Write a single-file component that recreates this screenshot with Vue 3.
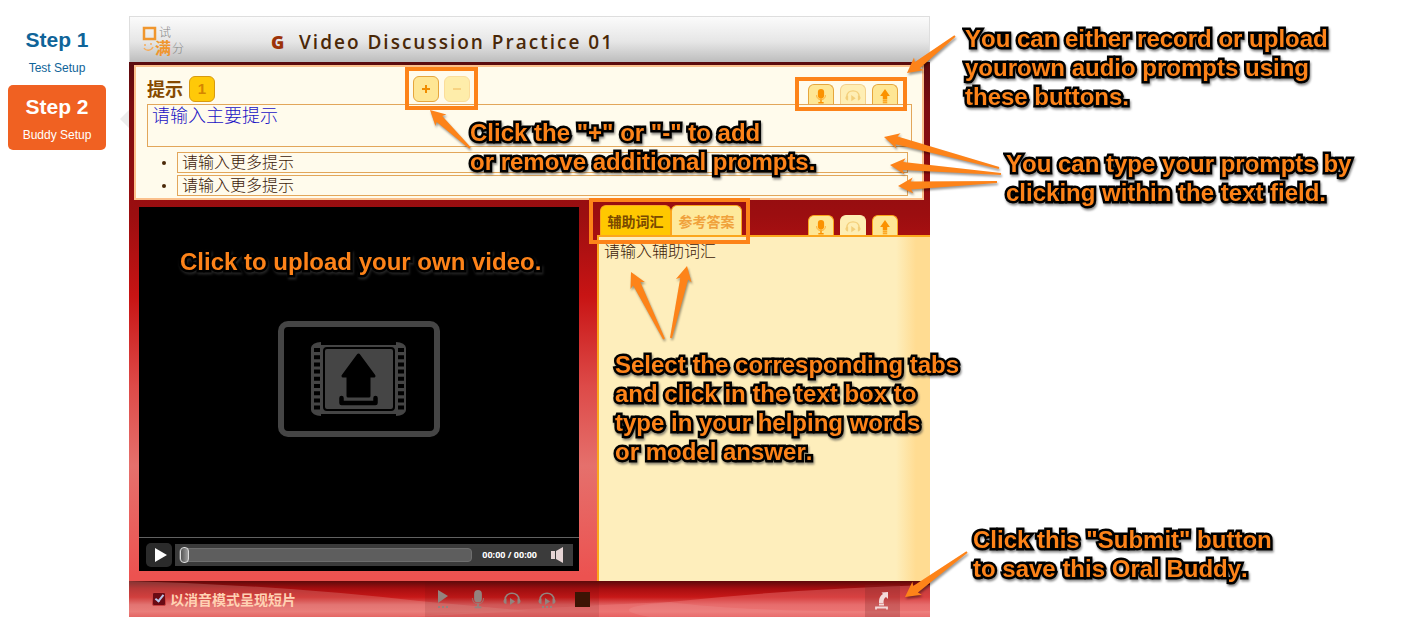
<script setup>
import { ref } from 'vue'

const steps = [
  { title: 'Step 1', name: 'Test Setup', active: false },
  { title: 'Step 2', name: 'Buddy Setup', active: true },
]

const mainPrompt = ref('请输入主要提示')
const extraPrompts = ref(['请输入更多提示', '请输入更多提示'])
const helpText = ref('请输入辅助词汇')
const muted = ref(true)
const position = ref(0)

const audioTools = [
  { id: 'mic', label: 'Record audio' },
  { id: 'listen', label: 'Listen' },
  { id: 'upload', label: 'Upload audio' },
]

const notes = [
  { id: 'audio', lines: ['You can either record or upload', 'yourown audio prompts using', 'these buttons.'] },
  { id: 'add', lines: ['Click the "+" or "-" to add', 'or remove additional prompts.'] },
  { id: 'type', lines: ['You can type your prompts by', 'clicking within the text field.'] },
  { id: 'video', lines: ['Click to upload your own video.'] },
  { id: 'tabs', lines: ['Select the corresponding tabs', 'and click in the text box to', 'type in your helping words', 'or model answer.'] },
  { id: 'submit', lines: ['Click this "Submit" button', 'to save this Oral Buddy.'] },
]

// Each arrow runs from its thin tail to its tip: [tailX, tailY, tipX, tipY]
const arrows = [
  [955, 36, 907, 73],
  [470, 148, 430, 110],
  [999, 168, 884, 137],
  [1001, 174, 890, 165],
  [997, 182, 898, 186],
  [664, 339, 631, 272],
  [671, 338, 687, 266],
  [967, 552, 905, 597],
]

function arrowPoints([x1, y1, x2, y2]) {
  const len = Math.hypot(x2 - x1, y2 - y1)
  const ux = (x2 - x1) / len
  const uy = (y2 - y1) / len
  const at = (back, side) =>
    `${(x2 - ux * back - uy * side).toFixed(1)},${(y2 - uy * back + ux * side).toFixed(1)}`
  return [at(0, 0), at(15, 8), at(13, 4), at(len, 1), at(len, -1), at(13, -4), at(15, -8)].join(' ')
}
</script>

<template>
  <div class="page">
    <svg class="defs" width="0" height="0" aria-hidden="true">
      <symbol id="i-mic" viewBox="0 0 16 18">
        <rect x="4.5" y="1" width="7" height="11" rx="3.5" fill="currentColor" />
        <path d="M3 8c0 7 10 7 10 0" fill="none" stroke="currentColor" stroke-width="1" opacity=".7" />
        <path d="M8 13v3M5 16.5h6" fill="none" stroke="currentColor" stroke-width="1.6" />
      </symbol>
      <symbol id="i-listen" viewBox="0 0 20 18">
        <path d="M3 10c0-9 14-9 14 0" fill="none" stroke="currentColor" stroke-width="1.6" />
        <path d="M4.500 8.500C.5 8.500.5 14 4.500 14zM15.500 8.500c4 0 4 5.500 0 5.500z" fill="currentColor" />
        <path d="M8 8l5 3.500-5 3.500z" fill="currentColor" />
      </symbol>
      <symbol id="i-upload" viewBox="0 0 16 18">
        <path d="M8 1l5.500 8h-3v4h-5V9h-3z" fill="currentColor" />
        <path d="M5.500 14.500h5M5.500 16.500h5" stroke="currentColor" stroke-width="1.200" />
      </symbol>
    </svg>

    <nav class="steps">
      <a v-for="s in steps" :key="s.title" href="#" class="step" :class="{ active: s.active }">
        <strong>{{ s.title }}</strong>
        <span>{{ s.name }}</span>
      </a>
    </nav>

    <main class="app">
      <header class="bar">
        <svg class="logo" width="44" height="42" viewBox="0 -5 44 42" role="img" aria-label="口试满分">
          <rect x="2" y="2" width="11" height="11" fill="none" stroke="#f0962e" stroke-width="2.500" />
          <text x="17" y="11" class="l-thin">试</text>
          <text x="13" y="28" class="l-bold">满</text>
          <text x="30" y="27" class="l-thin">分</text>
          <path d="M3 18v2M9 17v2M2 22c2 3.500 7 3 9-1" fill="none" stroke="#f6ad5c" stroke-width="1.500" />
        </svg>
        <span class="mark">G</span>
        <h1>Video Discussion Practice 01</h1>
      </header>

      <section class="prompts">
        <div class="prompt-head">
          <div class="prompt-title">
            <h2>提示</h2>
            <span class="num">1</span>
          </div>
          <div class="adders">
            <button type="button" class="square" aria-label="Add prompt">
              <svg width="10" height="10" viewBox="0 0 10 10"><path d="M5 1v8M1 5h8" stroke="#f08c00" stroke-width="2" /></svg>
            </button>
            <button type="button" class="square off" aria-label="Remove prompt">
              <svg width="10" height="10" viewBox="0 0 10 10"><path d="M1 5h8" stroke="#f0b858" stroke-width="1" /></svg>
            </button>
          </div>
          <div class="tools">
            <button v-for="t in audioTools" :key="t.id" type="button" class="tool" :class="t.id" :aria-label="t.label">
              <svg width="18" height="16"><use :href="'#i-' + t.id" /></svg>
            </button>
          </div>
        </div>
        <textarea v-model="mainPrompt" class="main-prompt" aria-label="主要提示"></textarea>
        <ul>
          <li v-for="(p, i) in extraPrompts" :key="i">
            <input v-model="extraPrompts[i]" type="text" aria-label="更多提示" />
          </li>
        </ul>
      </section>

      <div class="work">
        <section class="player">
          <button type="button" class="stage" aria-label="Upload video">
            <svg width="162" height="116" viewBox="0 0 162 116">
              <rect x="3" y="3" width="156" height="110" rx="7" fill="none" stroke="#454545" stroke-width="6" />
              <path d="M43 21a10 6 0 0 0-10 6v62a10 6 0 0 0 10 6v-2h75v2a10 6 0 0 0 10-6V27a10 6 0 0 0-10-6v3H43z" fill="#454545" />
              <rect x="46" y="27" width="70" height="62" rx="3" fill="#454545" stroke="#000" stroke-width="2" />
              <path d="M39 27v62M123 27v62" stroke="#000" stroke-width="6" stroke-dasharray="4 3.200" />
              <path d="M80.500 34L96 55h-5v20H70V55h-5z" fill="#000" stroke="#000" stroke-width="3" stroke-linejoin="round" />
              <path d="M63.500 77v5h34v-5" fill="none" stroke="#000" stroke-width="4.500" stroke-linejoin="round" stroke-linecap="round" />
            </svg>
          </button>
          <div class="controls">
            <button type="button" class="play" aria-label="Play">
              <svg width="12" height="16" viewBox="0 0 12 16"><path d="M0 1l12 7-12 7z" fill="#fff" /></svg>
            </button>
            <div class="track">
              <input v-model="position" type="range" min="0" max="100" aria-label="Position" />
              <span class="time">00:00 / 00:00</span>
              <button type="button" class="volume" aria-label="Volume">
                <svg width="12" height="16" viewBox="0 0 12 16"><path d="M0 4h4v8H0zM5 4l7-4v16l-7-4z" fill="#e6d5d5" /></svg>
              </button>
            </div>
          </div>
        </section>

        <section class="help">
          <div class="help-head">
            <div class="tabs" role="tablist">
              <button type="button" role="tab" aria-selected="true" class="tab on">辅助词汇</button>
              <button type="button" role="tab" aria-selected="false" class="tab">参考答案</button>
            </div>
            <div class="tools">
              <button v-for="t in audioTools" :key="t.id" type="button" class="tool" :class="t.id" :aria-label="t.label">
                <svg width="18" height="16"><use :href="'#i-' + t.id" /></svg>
              </button>
            </div>
          </div>
          <textarea v-model="helpText" class="help-text" aria-label="辅助词汇"></textarea>
        </section>
      </div>

      <footer class="foot">
        <svg class="waves" viewBox="0 0 800 36" preserveAspectRatio="none" aria-hidden="true">
          <path d="M0 0Q150 4 290 20L400 30 270 36H0z" fill="#e8a8a0" opacity=".28" />
          <path d="M800 4Q660 8 540 21Q400 27 270 36H800z" fill="#f08080" opacity=".4" />
          <path d="M540 21Q470 27 520 36H800V30Q620 32 540 21z" fill="#fff" opacity=".08" />
        </svg>
        <label class="mute">
          <input v-model="muted" type="checkbox" />
          <span>以消音模式呈现短片</span>
        </label>
        <div class="recorder">
          <button type="button" aria-label="Play prompt">
            <svg width="12" height="20" viewBox="0 0 12 20"><path d="M1 1l10 6-10 7z" fill="currentColor" /><path d="M1 18h10" stroke="currentColor" stroke-width="2" stroke-dasharray="2 2" /></svg>
          </button>
          <button type="button" aria-label="Record">
            <svg width="18" height="20"><use href="#i-mic" /></svg>
          </button>
          <button type="button" aria-label="Play recording">
            <svg width="20" height="20"><use href="#i-listen" /></svg>
          </button>
          <button type="button" aria-label="Play all">
            <svg width="20" height="20" viewBox="0 0 20 20"><use href="#i-listen" width="20" height="20" /><path d="M5 18h10" stroke="currentColor" stroke-width="2" stroke-dasharray="2 2" /></svg>
          </button>
          <button type="button" aria-label="Stop">
            <svg width="15" height="20" viewBox="0 0 15 20"><path d="M0 3h15v15H0z" fill="#3c1404" /></svg>
          </button>
        </div>
        <button type="button" class="submit" aria-label="Submit">
          <svg width="15" height="20" viewBox="0 0 15 20">
            <path d="M4 12c0-5 1-7 4-9L6.500 1.500 13 1v7l-2-2c-2 1-2.500 3-2.500 6z" fill="#f3d9d9" />
            <path d="M4 13.500h5M1 18.500v-2h11v2" fill="none" stroke="#f3d9d9" stroke-width="1.800" />
          </svg>
        </button>
      </footer>
    </main>

    <div class="overlay">
      <svg class="arrows" aria-hidden="true">
        <polygon v-for="(a, i) in arrows" :key="i" :points="arrowPoints(a)" />
      </svg>
      <span class="ring ring-add"></span>
      <span class="ring ring-audio"></span>
      <span class="ring ring-tabs"></span>
      <p v-for="n in notes" :key="n.id" class="note" :class="'note-' + n.id">
        <span v-for="l in n.lines" :key="l">{{ l }}</span>
      </p>
    </div>
  </div>
</template>

<style>
body {
  background: #fff;
}
</style>

<style scoped>
.page {
  position: relative;
  display: grid;
  grid-template-columns: 98px minmax(0, 801fr) minmax(0, 453fr);
  column-gap: 23px;
  align-items: start;
  box-sizing: border-box;
  min-height: 100vh;
  padding: 16px 0 0 8px;
  font-family: "Liberation Sans", "Noto Sans CJK SC", sans-serif;
}
.page *,
.page *::before,
.page *::after {
  box-sizing: border-box;
}
.defs {
  position: absolute;
}
button,
input,
textarea {
  margin: 0;
  padding: 0;
  border: 0;
  background: none;
  font: inherit;
  color: inherit;
  outline: none;
}
button {
  display: flex;
  align-items: center;
  justify-content: center;
  cursor: pointer;
}
svg {
  display: block;
}

.steps {
  display: flex;
  flex-direction: column;
  gap: 2px;
  padding-top: 2px;
}
.step {
  display: flex;
  flex-direction: column;
  align-items: center;
  gap: 8px;
  height: 65px;
  padding-top: 10px;
  border-radius: 5px;
  color: #0f6499;
  text-decoration: none;
}
.step strong {
  font-size: 21px;
  line-height: 24px;
}
.step span {
  font-size: 12px;
  line-height: 16px;
}
.step.active {
  background: #f06122;
  color: #fff;
}

.app {
  position: relative;
  background: linear-gradient(#5a0b0e 46px, #7c0c10 90px, #9c0e10 200px, #c81414 280px, #dd4a48 370px, #e5706c 450px, #ec5250 560px);
}
.app::before {
  content: "";
  position: absolute;
  left: -9px;
  top: 94px;
  border: solid transparent;
  border-width: 9px 9px 9px 0;
  border-right-color: #ececec;
}
.bar {
  display: flex;
  align-items: center;
  height: 46px;
  padding: 4px 12px 0;
  border: 1px solid #dedede;
  border-bottom: 0;
  background: linear-gradient(#fbfbfb, #e6e6e6 55%, #bdbdbd);
}
.logo {
  flex: none;
}
.l-thin {
  font: 300 12px "Noto Sans CJK SC", sans-serif;
  fill: #858585;
}
.l-bold {
  font: 700 16px "Noto Sans CJK SC", sans-serif;
  fill: #f0962e;
}
.mark {
  width: 28px;
  margin-left: 85px;
  font: 800 18px/24px "Open Sans", sans-serif;
  color: #9c3208;
}
h1 {
  margin: 0;
  font: 600 19px/24px "Open Sans", sans-serif;
  letter-spacing: 2px;
  color: #4a2808;
  white-space: nowrap;
}

.prompts {
  margin: 3px 6px 0 5px;
  padding: 9px 10px 2px 11px;
  border: 2px solid #fbc08c;
  background: #fffbec;
}
.prompt-head {
  display: grid;
  grid-template-columns: minmax(0, 266fr) auto minmax(0, 442fr);
  height: 28px;
}
.prompt-title,
.adders {
  display: flex;
  align-items: flex-start;
  gap: 6px;
}
.adders {
  gap: 5px;
}
h2 {
  margin: 0;
  font: 700 18px/24px "Noto Sans CJK SC", sans-serif;
  color: #864a00;
}
.num,
.square {
  width: 26px;
  height: 26px;
  border: 1px solid #d79a10;
  border-radius: 6px;
}
.num {
  background: #ffc908;
  color: #d58500;
  font: 700 15px/24px "Liberation Sans", sans-serif;
  text-align: center;
}
.square {
  background: #fee694;
  border-color: #e6a63c;
}
.square.off {
  background: #feedaa;
  border-color: #fbdd9a;
}
.tools {
  display: flex;
  align-items: flex-end;
  justify-content: flex-end;
  gap: 6px;
}
.prompt-head .tools {
  padding-right: 14px;
}
.tool {
  width: 26px;
  height: 20px;
  padding-top: 2px;
  border: 1px solid #e6a63c;
  border-bottom: 0;
  border-radius: 6px 6px 0 0;
  background: #fee694;
  color: #fb9200;
}
.tool.listen {
  border-color: #f3d08c;
  background: #feeeb4;
  color: #f3cf7a;
}
.main-prompt {
  display: block;
  width: 100%;
  height: 43px;
  padding: 0 4px;
  border: 1px solid #e2a65a;
  font-size: 18px;
  font-weight: 300;
  line-height: 22px;
  color: #1a12c4;
  resize: none;
}
ul {
  display: flex;
  flex-direction: column;
  gap: 2px;
  margin: 5px 4px 0 0;
  padding: 0 0 0 30px;
}
li {
  position: relative;
  display: flex;
}
li::before {
  content: "";
  position: absolute;
  left: -15px;
  top: 9px;
  width: 4px;
  height: 4px;
  border-radius: 2px;
  background: #4a2808;
}
li input {
  flex: 1;
  min-width: 0;
  height: 21px;
  padding: 0 4px 3px;
  border: 1px solid #e2a65a;
  font-size: 16px;
  font-weight: 300;
  line-height: 16px;
  color: #3c2008;
}

.work {
  display: grid;
  grid-template-columns: minmax(0, 440fr) minmax(0, 333fr);
  column-gap: 18px;
  padding-left: 10px;
}
.player {
  margin: 7px 0 10px;
  background: #000;
}
.stage {
  width: 100%;
  height: 331px;
  padding-top: 13px;
  border-bottom: 1px solid #626262;
}
.controls {
  display: flex;
  align-items: center;
  gap: 3px;
  height: 33px;
  padding: 0 6px 0 7px;
}
.play {
  width: 26px;
  height: 24px;
  padding-left: 3px;
  border-radius: 5px;
  background: #2b2b2b;
}
.track {
  flex: 1;
  display: flex;
  align-items: center;
  height: 22px;
  padding: 0 10px 0 4px;
  background: #3b3b3b;
}
.track input {
  flex: 1;
  min-width: 0;
  height: 14px;
  border: 1px solid #6e6e6e;
  border-radius: 4px;
  background: #5e5e5e;
  appearance: none;
}
.track input::-webkit-slider-thumb {
  width: 9px;
  height: 16px;
  border: 1px solid #dcdcdc;
  border-radius: 4px;
  background: linear-gradient(90deg, #555, #a0a0a0);
  appearance: none;
}
.time {
  margin: 0 14px 0 10px;
  font: 700 9px/16px "Noto Sans", sans-serif;
  color: #fff;
}

.help {
  display: flex;
  flex-direction: column;
}
.help-head {
  display: flex;
  align-items: flex-end;
  justify-content: space-between;
  height: 35px;
  padding: 0 32px 0 3px;
}
.tabs {
  display: flex;
}
.tab {
  width: 71px;
  height: 30px;
  border: 1px solid #fba61c;
  border-bottom: 0;
  border-radius: 6px 6px 0 0;
  background: #fee99c;
  color: #f0a23c;
  font-size: 14px;
  font-weight: 700;
}
.tab.on {
  background: #ffc800;
  color: #7a4a00;
}
.help .tool {
  border-color: #fba61c;
}
.help .tool.listen {
  border-color: #feeeb4;
}
.help-text {
  flex: 1;
  display: block;
  width: 100%;
  padding: 5px 5px;
  border: solid #fba61c;
  border-width: 2px 0 0 2px;
  background: linear-gradient(90deg, #feeebc calc(100% - 34px), #ffdc92 calc(100% - 14px));
  font-size: 16px;
  font-weight: 300;
  line-height: 20px;
  color: #3c2008;
  resize: none;
}

.foot {
  position: relative;
  display: grid;
  grid-template-columns: minmax(0, 272fr) auto minmax(0, 266fr) auto;
  align-items: stretch;
  height: 36px;
  padding: 0 30px 0 23px;
  background: linear-gradient(#5e0a0a, #a80e10 22%, #c81818 45%, #e06060 66%, #ea6e6c 85%, #e24c4c);
}
.waves {
  position: absolute;
  inset: 0;
  width: 100%;
  height: 100%;
}
.mute,
.recorder,
.submit {
  position: relative;
}
.mute {
  display: flex;
  align-items: center;
  gap: 4px;
  font-size: 14px;
  font-weight: 700;
  color: #ffd2b4;
  white-space: nowrap;
}
.mute input {
  position: relative;
  width: 14px;
  height: 14px;
  border: 1px solid #c84040;
  border-radius: 2px;
  background: #6a0a14;
  appearance: none;
}
.mute input:checked::after {
  content: "";
  position: absolute;
  left: 4px;
  top: 0;
  width: 5px;
  height: 9px;
  border: solid #b8c4e8;
  border-width: 0 2px 2px 0;
  transform: rotate(38deg);
}
.recorder {
  display: flex;
  align-items: center;
  gap: 15px;
  padding: 0 9px 0 12px;
  background: rgba(90, 20, 20, 0.12);
  color: #93837e;
}
.recorder button:nth-child(2) {
  margin-left: 5px;
}
.recorder button:nth-child(5) {
  margin-left: 3px;
}
.submit {
  grid-column: 4;
  width: 35px;
  margin-top: 4px;
  background: rgba(120, 40, 40, 0.25);
}

.overlay {
  position: absolute;
  inset: 0;
  pointer-events: none;
}
.arrows {
  position: absolute;
  inset: 0;
  width: 100%;
  height: 100%;
  fill: #fd8319;
  filter: drop-shadow(1px 2px 1px rgba(0, 0, 0, 0.4));
}
.ring {
  position: absolute;
  border: 4px solid #fd8319;
}
.ring-add {
  left: 405px;
  top: 67px;
  width: 73px;
  height: 43px;
}
.ring-audio {
  left: 795px;
  top: 77px;
  width: 112px;
  height: 34px;
}
.ring-tabs {
  left: 589px;
  top: 198px;
  width: 161px;
  height: 46px;
}
.note {
  position: absolute;
  display: flex;
  flex-direction: column;
  margin: 0;
  font-size: 24px;
  font-weight: 700;
  font-kerning: none;
  line-height: 29px;
  color: #fd8319;
  white-space: nowrap;
  -webkit-text-stroke: 5px #000;
  paint-order: stroke fill;
  filter: drop-shadow(1px 2px 1px rgba(60, 60, 60, 0.6));
}
.note-audio {
  left: 965px;
  top: 24px;
}
.note-add {
  left: 470px;
  top: 118px;
}
.note-type {
  left: 1006px;
  top: 149px;
}
.note-video {
  left: 180px;
  top: 247px;
}
.note-tabs {
  left: 615px;
  top: 350px;
}
.note-submit {
  left: 973px;
  top: 525px;
}
</style>
